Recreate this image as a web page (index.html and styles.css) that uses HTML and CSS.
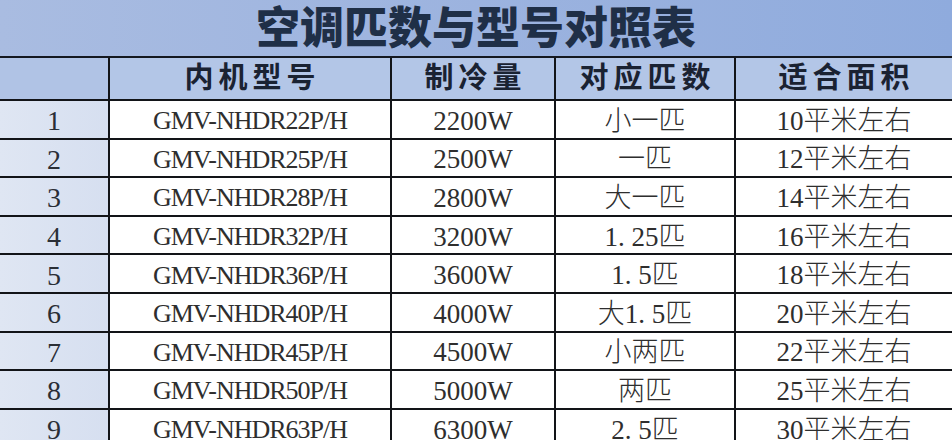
FILE: index.html
```html
<!DOCTYPE html>
<html lang="zh-CN">
<head>
<meta charset="utf-8">
<title>空调匹数与型号对照表</title>
<link rel="stylesheet" href="styles.css">
</head>
<body>
<div class="sheet">
  <div class="title">空调匹数与型号对照表</div>
  <div class="grid">
    <div class="cell head idx"></div>
    <div class="cell head"><span class="ht">内机型号</span></div>
    <div class="cell head"><span class="ht">制冷量</span></div>
    <div class="cell head"><span class="ht">对应匹数</span></div>
    <div class="cell head last"><span class="ht">适合面积</span></div>

    <div class="cell idx">1</div>
    <div class="cell model">GMV-NHDR22P/H</div>
    <div class="cell">2200W</div>
    <div class="cell">小一匹</div>
    <div class="cell last">10平米左右</div>

    <div class="cell idx">2</div>
    <div class="cell model">GMV-NHDR25P/H</div>
    <div class="cell">2500W</div>
    <div class="cell">一匹</div>
    <div class="cell last">12平米左右</div>

    <div class="cell idx">3</div>
    <div class="cell model">GMV-NHDR28P/H</div>
    <div class="cell">2800W</div>
    <div class="cell">大一匹</div>
    <div class="cell last">14平米左右</div>

    <div class="cell idx">4</div>
    <div class="cell model">GMV-NHDR32P/H</div>
    <div class="cell">3200W</div>
    <div class="cell">1. 25匹</div>
    <div class="cell last">16平米左右</div>

    <div class="cell idx">5</div>
    <div class="cell model">GMV-NHDR36P/H</div>
    <div class="cell">3600W</div>
    <div class="cell">1. 5匹</div>
    <div class="cell last">18平米左右</div>

    <div class="cell idx">6</div>
    <div class="cell model">GMV-NHDR40P/H</div>
    <div class="cell">4000W</div>
    <div class="cell">大1. 5匹</div>
    <div class="cell last">20平米左右</div>

    <div class="cell idx">7</div>
    <div class="cell model">GMV-NHDR45P/H</div>
    <div class="cell">4500W</div>
    <div class="cell">小两匹</div>
    <div class="cell last">22平米左右</div>

    <div class="cell idx">8</div>
    <div class="cell model">GMV-NHDR50P/H</div>
    <div class="cell">5000W</div>
    <div class="cell">两匹</div>
    <div class="cell last">25平米左右</div>

    <div class="cell idx">9</div>
    <div class="cell model">GMV-NHDR63P/H</div>
    <div class="cell">6300W</div>
    <div class="cell">2. 5匹</div>
    <div class="cell last">30平米左右</div>
  </div>
</div>
</body>
</html>
```
FILE: styles.css
```css
html, body {
  margin: 0;
  padding: 0;
  background: #ffffff;
}

.sheet {
  width: 952px;
  height: 440px;
  overflow: hidden;
}

.title {
  box-sizing: border-box;
  height: 58px;
  padding-bottom: 6px;
  border-bottom: 2px solid #141820;
  background: linear-gradient(90deg, #a9bce1 0%, #9cb3df 50%, #8fabdd 100%);
  display: flex;
  align-items: center;
  justify-content: center;
  font-family: "Noto Sans CJK SC", "Noto Sans", sans-serif;
  font-weight: 900;
  font-size: 44px;
  line-height: 1.2;
  color: #1f2f47;
}

.grid {
  display: grid;
  grid-template-columns: 110px 282px 164px 180px 216px;
  grid-template-rows: 43px repeat(9, 38.6px);
}

.cell {
  box-sizing: border-box;
  padding-top: 4px;
  border-right: 2px solid #121418;
  border-bottom: 2px solid #121418;
  display: flex;
  align-items: center;
  justify-content: center;
  background: #ffffff;
  font-family: "Liberation Serif", "Noto Sans CJK SC", serif;
  font-size: 27px;
  font-weight: 300;
  line-height: 1;
  color: #2e2e2e;
  white-space: nowrap;
}

.cell.last {
  border-right: none;
}

.cell.head {
  padding-top: 0;
  background: #b3c6e7;
  font-weight: 700;
  font-size: 29px;
  color: #1a2232;
}

.ht {
  letter-spacing: 5px;
  padding-left: 5px;
}

.cell.idx {
  background: linear-gradient(90deg, #dfe6f3 0%, #d6dff0 100%);
  font-size: 28px;
  color: #2a2e36;
}

.cell.head.idx {
  background: #b0c3e5;
}

.cell.model {
  font-size: 26px;
  letter-spacing: -1px;
}
```
